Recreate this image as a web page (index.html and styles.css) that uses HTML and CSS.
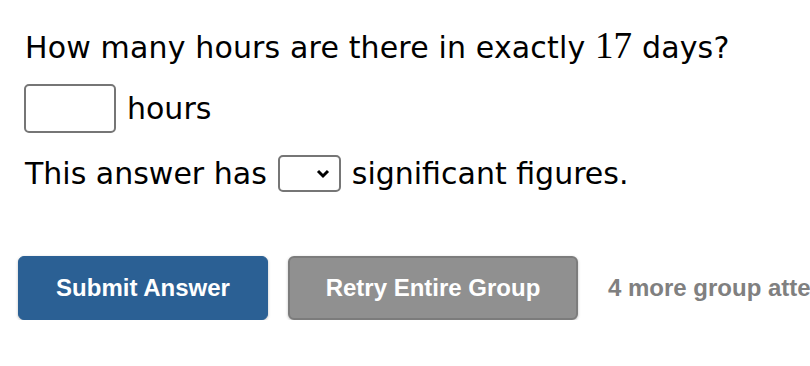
FILE: index.html
```html
<!DOCTYPE html>
<html lang="en">
<head>
    <meta charset="UTF-8">
    <title>Question</title>
    <link rel="stylesheet" href="styles.css">
</head>
<body>
    <div class="question">
        <p class="prompt">How many hours are there in exactly <span class="math">17</span> days?</p>
        <p class="row"><input type="text" class="answer"> hours</p>
        <p class="row">This answer has
            <span class="select_wrap">
                <select class="sigfigs">
                    <option></option>
                    <option>1</option>
                    <option>2</option>
                    <option>3</option>
                </select>
                <svg class="chevron" width="14" height="10" viewBox="0 0 14 10">
                    <path d="M2 2 L7 7 L12 2" fill="none" stroke="black" stroke-width="3"/>
                </svg>
            </span>
            significant figures.</p>
    </div>
    <div class="actions">
        <button class="btn submit">Submit Answer</button>
        <button class="btn retry">Retry Entire Group</button>
        <span class="attempts">4 more group attempts remaining</span>
    </div>
</body>
</html>
```

FILE: styles.css
```css
*{
    box-sizing: border-box;
}
body{
    margin: 0;
    font-family: "DejaVu Sans", Verdana, sans-serif;
    color: black;
    overflow: hidden;
}
.question{
    padding: 24px 0 0 25px;
    font-size: 30px;
}
.question p{
    margin: 0;
}
.prompt{
    line-height: 44px;
    letter-spacing: 0.15px;
}
.math{
    font-family: "Liberation Serif", serif;
    font-size: 37px;
}
.row{
    display: flex;
    align-items: center;
    gap: 11px;
    margin-top: 14px !important;
}
.answer{
    width: 92px;
    height: 49px;
    margin-left: -1px;
    border: 2px solid #767676;
    border-radius: 5px;
    font-size: 24px;
}
.row + .row{
    margin-top: 22px !important;
}
.select_wrap{
    position: relative;
    display: inline-flex;
}
.sigfigs{
    width: 63px;
    height: 37px;
    border: 2px solid #767676;
    border-radius: 5px;
    background: white;
    appearance: none;
    -webkit-appearance: none;
}
.chevron{
    position: absolute;
    right: 11px;
    top: 14px;
    pointer-events: none;
}
.actions{
    display: flex;
    align-items: center;
    gap: 20px;
    margin-top: 64px;
    padding-left: 18px;
    white-space: nowrap;
}
.btn{
    flex-shrink: 0;
    height: 64px;
    border-radius: 6px;
    font-family: "Liberation Sans", Arial, sans-serif;
    font-weight: bold;
    font-size: 24px;
    color: white;
    box-shadow: 0 1px 3px rgba(0,0,0,0.25);
}
.submit{
    width: 250px;
    background-color: #2b6094;
    border: 1px solid #2b6094;
}
.retry{
    width: 290px;
    background-color: #909090;
    border: 2px solid #7c7c7c;
}
.attempts{
    margin-left: 10px;
    font-family: "Liberation Sans", Arial, sans-serif;
    font-weight: bold;
    font-size: 24px;
    color: #808080;
}
```
